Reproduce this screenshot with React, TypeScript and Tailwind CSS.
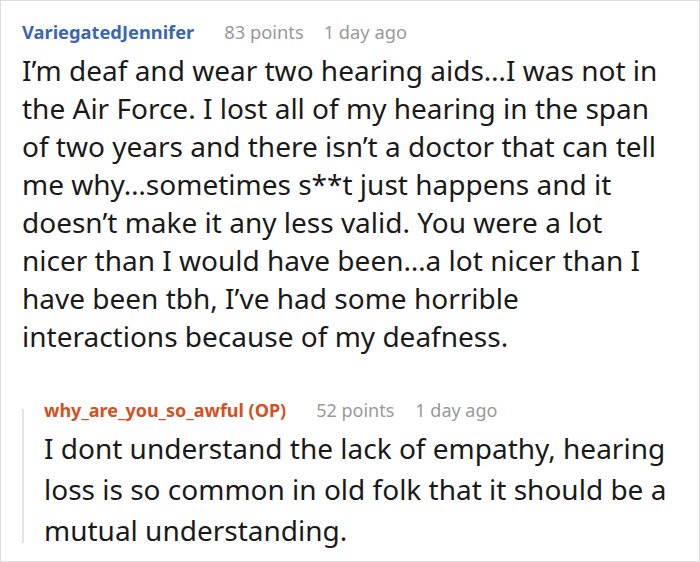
import React from "react";

export default function App() {
  return (
    <div className="w-[700px] h-[562px] bg-white border border-[#dedede] overflow-hidden" style={{ fontFamily: '"Noto Sans", sans-serif' }}>
      <div className="pl-[21px] pt-[18px]">
        <div className="flex items-baseline text-[18.3px] leading-[26px]">
          <span className="font-bold text-[#3a67b0]">VariegatedJennifer</span>
          <span className="ml-[30px] text-[#999999]">83 points</span>
          <span className="ml-[20px] text-[#999999]">1 day ago</span>
        </div>
        <div className="mt-[6px] text-[28px] leading-[38px] text-[#1a1a1a] whitespace-nowrap">
          <div>I’m deaf and wear two hearing aids…I was not in</div>
          <div>the Air Force. I lost all of my hearing in the span</div>
          <div>of two years and there isn’t a doctor that can tell</div>
          <div>me why…sometimes s**t just happens and it</div>
          <div>doesn’t make it any less valid. You were a lot</div>
          <div>nicer than I would have been…a lot nicer than I</div>
          <div>have been tbh, I’ve had some horrible</div>
          <div>interactions because of my deafness.</div>
        </div>
        <div className="mt-[42px] flex">
          <div className="w-[2px] bg-[#e3e3e3] mt-[12px] mb-[8px]" />
          <div className="pl-[20px]">
            <div className="flex items-baseline text-[18px] leading-[26px]">
              <span className="font-bold text-[#d4501f]">why_are_you_so_awful (OP)</span>
              <span className="ml-[30px] text-[#999999]">52 points</span>
              <span className="ml-[21px] text-[#999999]">1 day ago</span>
            </div>
            <div className="mt-[5px] text-[28px] leading-[41px] text-[#1a1a1a] whitespace-nowrap">
              <div>I dont understand the lack of empathy, hearing</div>
              <div>loss is so common in old folk that it should be a</div>
              <div>mutual understanding.</div>
            </div>
          </div>
        </div>
      </div>
    </div>
  );
}
